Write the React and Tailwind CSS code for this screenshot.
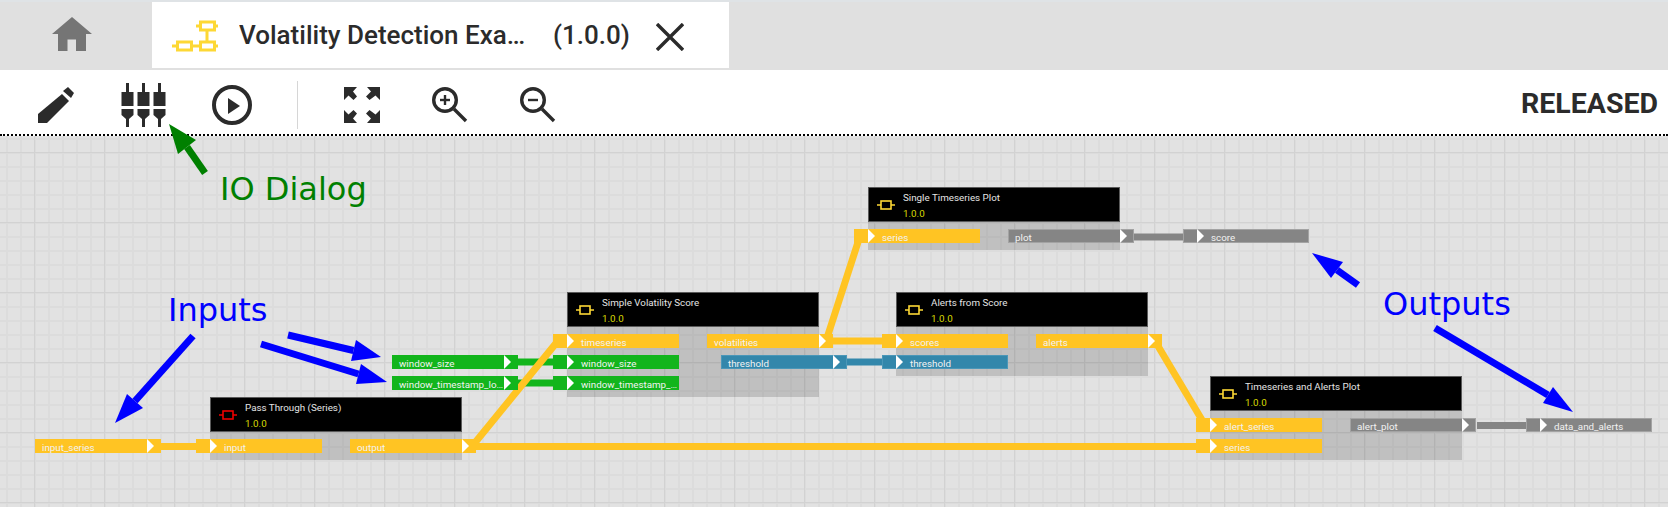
import clsx from 'clsx'

// wire and port colours
const ORANGE = '#ffc423'
const GREEN = '#12b51c'
const BLUE = '#3387ab'
const GRAY = '#858585'

const portBg = {
  orange: 'bg-[#ffc423]',
  green: 'bg-[#12b51c]',
  blue: 'bg-[#3387ab] shadow-[inset_0_0_0_1px_#4b97b8]',
  gray: 'bg-[#858585] shadow-[inset_0_0_0_1px_#a3a3a3]',
}

const nodes = [
  {
    title: 'Pass Through (Series)',
    pos: 'left-[210px] top-[261px]',
    icon: '#ee0000',
    rows: [[{ name: 'input', color: 'orange' }, { name: 'output', color: 'orange' }]],
  },
  {
    title: 'Simple Volatility Score',
    pos: 'left-[567px] top-[156px]',
    icon: '#fdd835',
    rows: [
      [{ name: 'timeseries', color: 'orange' }, { name: 'volatilities', color: 'orange' }],
      [{ name: 'window_size', color: 'green' }, { name: 'threshold', color: 'blue', shift: true }],
      [{ name: 'window_timestamp_location', color: 'green' }],
    ],
  },
  {
    title: 'Alerts from Score',
    pos: 'left-[896px] top-[156px]',
    icon: '#fdd835',
    rows: [
      [{ name: 'scores', color: 'orange' }, { name: 'alerts', color: 'orange' }],
      [{ name: 'threshold', color: 'blue' }],
    ],
  },
  {
    title: 'Single Timeseries Plot',
    pos: 'left-[868px] top-[51px]',
    icon: '#fdd835',
    rows: [[{ name: 'series', color: 'orange' }, { name: 'plot', color: 'gray' }]],
  },
  {
    title: 'Timeseries and Alerts Plot',
    pos: 'left-[1210px] top-[240px]',
    icon: '#fdd835',
    rows: [
      [{ name: 'alert_series', color: 'orange' }, { name: 'alert_plot', color: 'gray' }],
      [{ name: 'series', color: 'orange' }],
    ],
  },
]

const looseOutputs = [
  { name: 'input_series', color: 'orange', pos: 'left-[35px] top-[303px]' },
  { name: 'window_size', color: 'green', pos: 'left-[392px] top-[219px]' },
  { name: 'window_timestamp_location', color: 'green', pos: 'left-[392px] top-[240px]' },
]

const looseInputs = [
  { name: 'score', color: 'gray', pos: 'left-[1183px] top-[93px]' },
  { name: 'data_and_alerts', color: 'gray', pos: 'left-[1526px] top-[282px]' },
]

// [tail, tip, head corner, head corner]
const arrows = [
  { color: '#008000', pts: [[205, 173], [169, 124], [178, 154], [196, 140]] },
  { color: '#0000ff', pts: [[193, 336], [115, 423], [127, 394], [143, 408]] },
  { color: '#0000ff', pts: [[288, 335], [381, 357], [356, 340], [351, 361]] },
  { color: '#0000ff', pts: [[261, 344], [387, 382], [361, 364], [356, 384]] },
  { color: '#0000ff', pts: [[1358, 285], [1312, 253], [1343, 262], [1331, 278]] },
  { color: '#0000ff', pts: [[1435, 328], [1573, 412], [1553, 387], [1543, 403]] },
]

function Triangle() {
  return <span className="h-0 w-0 shrink-0 border-y-[7px] border-l-[7px] border-y-transparent border-l-white" />
}

function InputPort({ port, className }) {
  return (
    <div className={clsx('flex h-[14px] w-[126px] items-center text-[9.8px] text-[#f2f2f2]', portBg[port.color], className)}>
      <span className="w-[14px] shrink-0" />
      <Triangle />
      <span className="h-[14px] min-w-0 flex-1 truncate pl-[7px] leading-[17px]">{port.name}</span>
    </div>
  )
}

function OutputPort({ port, className }) {
  return (
    <div className={clsx('flex h-[14px] w-[126px] items-center text-[9.8px] text-[#f2f2f2]', portBg[port.color], className)}>
      <span className="h-[14px] min-w-0 flex-1 truncate pl-[7px] leading-[17px]">{port.name}</span>
      <Triangle />
      <span className="w-[7px] shrink-0" />
    </div>
  )
}

function NodeIcon({ color }) {
  return (
    <svg width="18" height="10" viewBox="0 0 18 10" fill="none" stroke={color} strokeWidth="1.6">
      <rect x="4" y="1" width="10" height="8" />
      <path d="M0 5H4M14 5H18" />
    </svg>
  )
}

function Node({ node }) {
  return (
    <div className={clsx('absolute w-[252px]', node.pos)}>
      <div className="flex h-[35px] border border-[#5a5a5a] bg-black">
        <div className="flex w-[34px] shrink-0 items-center pl-[8px] pt-[1px]">
          <NodeIcon color={node.icon} />
        </div>
        <div className="flex flex-col pt-[2px] text-[9.8px]">
          <span className="h-[17px] leading-[15px] text-[#e4e4e4]">{node.title}</span>
          <span className="leading-[15px] text-[#d8d800]">1.0.0</span>
        </div>
      </div>
      <div className="flex flex-col gap-[7px] bg-black/15 py-[7px]">
        {node.rows.map((row, i) => (
          <div key={i} className="flex h-[14px] justify-between">
            <InputPort port={row[0]} className="ml-[-14px]" />
            {row[1] && (
              <OutputPort port={row[1]} className={row[1].shift ? 'mr-[-28px]' : 'mr-[-14px]'} />
            )}
          </div>
        ))}
      </div>
    </div>
  )
}

function Wires() {
  return (
    <svg className="absolute inset-0" width="1668" height="371" viewBox="0 136 1668 371" fill="none" strokeWidth="7">
      <path d="M518 362H553M518 383H553" stroke={GREEN} />
      <path d="M847 362H882" stroke={BLUE} />
      <path d="M1134 237H1183M1477 425.5H1526" stroke={GRAY} />
      <path
        d="M155 446.5H200M470 446.5H1200M469 450L557 342M826 341L860 236M826 341H885M1155 341L1205 425"
        stroke={ORANGE}
      />
    </svg>
  )
}

function Arrows() {
  return (
    <svg className="pointer-events-none absolute inset-0" width="1668" height="507" viewBox="0 0 1668 507">
      {arrows.map(({ color, pts: [tail, tip, a, b] }, i) => (
        <g key={i} fill={color} stroke={color}>
          <line x1={tail[0]} y1={tail[1]} x2={(a[0] + b[0]) / 2} y2={(a[1] + b[1]) / 2} strokeWidth="7" />
          <polygon points={`${tip} ${a} ${b}`} stroke="none" />
        </g>
      ))}
    </svg>
  )
}

function HomeIcon() {
  return (
    <svg width="40" height="34" viewBox="0 0 40 34" fill="#757575">
      <path d="M20 0L40 17H34V34H24V22.5H15.5V34H6V17H0Z" />
    </svg>
  )
}

function PipelineIcon() {
  return (
    <svg width="46" height="32" viewBox="0 0 46 32" fill="none" stroke="#fdd835" strokeWidth="3">
      <rect x="28.5" y="2" width="14" height="8" />
      <rect x="5.5" y="22" width="14" height="8" />
      <rect x="28.5" y="22" width="14" height="8" />
      <path d="M24 6H28M43 6H46M35 10V22M0 26H5M20 26H28M43 26H46" />
    </svg>
  )
}

function PencilIcon() {
  return (
    <svg width="36" height="36" viewBox="0 0 36 36" fill="#2b2b2b">
      <path d="M0 36V27L24 7L31 14L9 36Z" />
      <path d="M25 4L30 0L36 6L33 11Z" />
    </svg>
  )
}

function PlugsIcon() {
  return (
    <svg width="46" height="44" viewBox="0 0 46 44" fill="#2b2b2b">
      {[0, 16, 32].map((x) => (
        <path
          key={x}
          transform={`translate(${x} 0)`}
          d="M5 0H8V9H12.5V23H0.5V9H5ZM0.5 26H12.5V32L8 36V44H5V36L0.5 32Z"
        />
      ))}
    </svg>
  )
}

function PlayIcon() {
  return (
    <svg width="40" height="40" viewBox="0 0 40 40">
      <circle cx="20" cy="20" r="18" fill="none" stroke="#2b2b2b" strokeWidth="4" />
      <path d="M16 13V29L28 21Z" fill="#2b2b2b" />
    </svg>
  )
}

function FitIcon() {
  return (
    <svg width="36" height="36" viewBox="0 0 36 36" fill="#2b2b2b">
      <path d="M0 0H13L9 4.5L13 9.5L9.5 13L4.5 8.5L0 13Z" />
      <path d="M36 0H23L27 4.5L22 9.5L25.5 13L31.5 8.5L36 13Z" />
      <path d="M0 36H13L9 31.5L13 26.5L9.5 23L4.5 27.5L0 23Z" />
      <path d="M36 36H23L27 31.5L22 26.5L25.5 23L31.5 27.5L36 23Z" />
    </svg>
  )
}

function ZoomIcon({ plus }) {
  return (
    <svg width="36" height="36" viewBox="0 0 36 36" fill="none" stroke="#2b2b2b">
      <circle cx="13" cy="13" r="11.3" strokeWidth="3.4" />
      <path d="M22 22L34 34" strokeWidth="3.4" />
      <path d="M8 13H18" strokeWidth="2.4" />
      {plus && <path d="M13 8V18" strokeWidth="2.4" />}
    </svg>
  )
}

export default function App() {
  return (
    <div className="relative flex h-[507px] w-full flex-col overflow-hidden bg-[#e0e0e0] font-['Roboto',sans-serif]">
      {/* Tabs */}
      <div className="flex h-[70px] shrink-0 border-t-2 border-[#dfe3e6] pb-[2px]">
        <div className="flex w-[152px] shrink-0 items-start pl-[52px] pt-[15px]">
          <HomeIcon />
        </div>
        <div className="flex w-[577px] items-center bg-white pl-[20px] text-[#2b2b2b]">
          <div className="mt-[2px]"><PipelineIcon /></div>
          <span className="ml-[21px] w-[288px] truncate text-[26px] font-medium">Volatility Detection Example</span>
          <span className="ml-[26px] text-[26px] font-medium">(1.0.0)</span>
          <svg className="ml-[26px] mt-[3px]" width="28" height="28" viewBox="0 0 28 28" stroke="#2b2b2b" strokeWidth="3.4">
            <path d="M1 1L27 27M27 1L1 27" />
          </svg>
        </div>
      </div>

      {/* Toolbar */}
      <div className="flex h-[66px] shrink-0 items-center border-b-2 border-dotted border-black bg-white pb-[1px] text-[#2b2b2b]">
        <div className="ml-[38px] mt-[6px]"><PencilIcon /></div>
        <div className="ml-[47px] mt-[6px]"><PlugsIcon /></div>
        <div className="ml-[45px] mt-[6px]"><PlayIcon /></div>
        <div className="ml-[45px] mt-[6px] h-[48px] w-px bg-[#d6d6d6]" />
        <div className="ml-[46px] mt-[6px]"><FitIcon /></div>
        <div className="ml-[52px] mt-[6px]"><ZoomIcon plus /></div>
        <div className="ml-[52px] mt-[6px]"><ZoomIcon /></div>
        <span className="ml-auto mr-[10px] mt-[5px] text-[28.5px] font-bold">RELEASED</span>
      </div>

      {/* Canvas */}
      <div className="relative flex-1 bg-[#e2e2e2] bg-[linear-gradient(to_right,#d2d2d2_1.5px,transparent_1.5px),linear-gradient(to_bottom,#d2d2d2_1.5px,transparent_1.5px),linear-gradient(to_right,#dcdcdc_2px,transparent_2px),linear-gradient(to_bottom,#dcdcdc_2px,transparent_2px)] bg-size-[70px_70px,70px_70px,14px_14px,14px_14px] bg-position-[34px_16px,34px_16px,6px_2px,6px_2px]">
        <Wires />
        {nodes.map((node) => (
          <Node key={node.title} node={node} />
        ))}
        {looseOutputs.map((port) => (
          <OutputPort key={port.pos} port={port} className={clsx('absolute', port.pos)} />
        ))}
        {looseInputs.map((port) => (
          <InputPort key={port.pos} port={port} className={clsx('absolute', port.pos)} />
        ))}
        <span className="absolute left-[220px] top-[37px] font-['DejaVu_Sans',sans-serif] text-[32px] leading-none text-[#008000]">IO Dialog</span>
        <span className="absolute left-[168px] top-[158px] font-['DejaVu_Sans',sans-serif] text-[32px] leading-none text-[#0000ff]">Inputs</span>
        <span className="absolute left-[1383px] top-[152px] font-['DejaVu_Sans',sans-serif] text-[32px] leading-none text-[#0000ff]">Outputs</span>
      </div>

      <Arrows />
    </div>
  )
}
